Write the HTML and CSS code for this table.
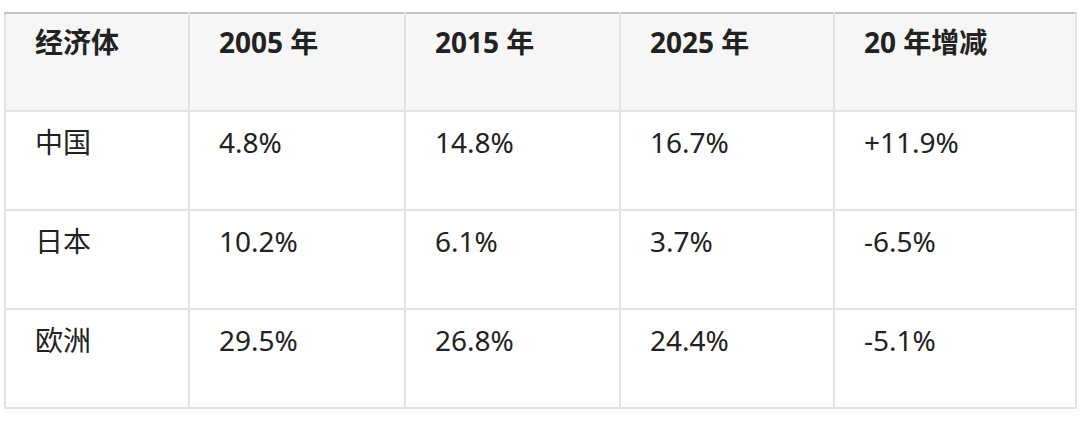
FILE: index.html
```html
<!DOCTYPE html>
<html lang="zh">
<head>
<meta charset="utf-8">
<link rel="stylesheet" href="styles.css">
</head>
<body>
<div class="wrap">
<table class="data">
  <colgroup>
    <col class="c1"><col class="c2"><col class="c3"><col class="c4"><col class="c5">
  </colgroup>
  <thead>
    <tr><th>经济体</th><th>2005 年</th><th>2015 年</th><th>2025 年</th><th>20 年增减</th></tr>
  </thead>
  <tbody>
    <tr><td>中国</td><td>4.8%</td><td>14.8%</td><td>16.7%</td><td>+11.9%</td></tr>
    <tr><td>日本</td><td>10.2%</td><td>6.1%</td><td>3.7%</td><td>-6.5%</td></tr>
    <tr><td>欧洲</td><td>29.5%</td><td>26.8%</td><td>24.4%</td><td>-5.1%</td></tr>
  </tbody>
</table>
</div>
</body>
</html>
```
FILE: styles.css
```css
html, body {
  margin: 0;
  padding: 0;
  background: #ffffff;
}
.wrap {
  padding: 12px 4px 0 4px;
}
.data {
  border-collapse: collapse;
  table-layout: fixed;
  width: 1071px;
  font-family: "Noto Sans", "Open Sans", "Noto Sans CJK SC", sans-serif;
  font-size: 28px;
  color: #222222;
  border-top: 2px solid #c4c4c4;
}
.c1 { width: 184px; }
.c2 { width: 216px; }
.c3 { width: 215px; }
.c4 { width: 214px; }
.c5 { width: 242px; }
.data th, .data td {
  border: 2px solid #e2e2e2;
  text-align: left;
  vertical-align: top;
  line-height: 42px;
  padding: 7px 29px 0 29px;
  box-sizing: border-box;
}
.data thead tr {
  height: 98px;
}
.data tbody tr {
  height: 99px;
}
.data th {
  background: #f6f6f6;
  font-weight: 700;
  border-top: 2px solid #c4c4c4;
}
.data td {
  font-weight: 400;
  padding-top: 9px;
}
```
